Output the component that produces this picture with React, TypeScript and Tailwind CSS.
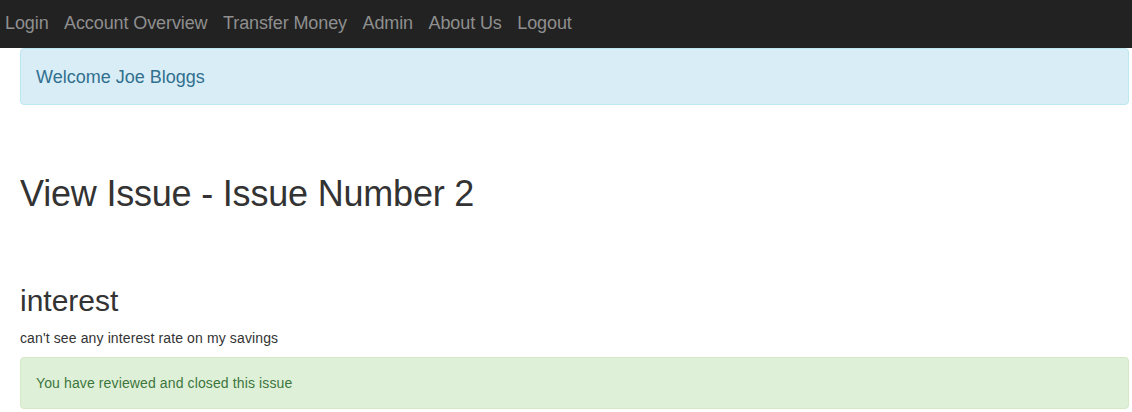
export default function App() {
  const links = ["Login", "Account Overview", "Transfer Money", "Admin", "About Us", "Logout"];
  return (
    <div className="min-h-[412px] bg-white" style={{ fontFamily: '"Liberation Sans", Arial, sans-serif' }}>
      <nav className="h-[48px] bg-[#222222] flex items-center pl-[5px] gap-[15.5px] pb-[2px]">
        {links.map((l) => (
          <span key={l} className="text-[18px] text-[#8f8f8f] leading-none tracking-[-0.1px]">{l}</span>
        ))}
      </nav>
      <div className="px-[20px] pr-[3px]">
        <div className="h-[57px] border border-[#bce8f1] bg-[#d9edf7] rounded-[4px] px-[15px] flex items-center text-[#31708f] text-[18px] pt-[1px]">
          Welcome Joe Bloggs
        </div>
        <h1 className="mt-[69px] text-[36px] leading-[40px] text-[#333333] tracking-[-0.2px]">View Issue - Issue Number 2</h1>
        <h2 className="mt-[70px] text-[30px] leading-[33px] text-[#333333]">interest</h2>
        <p className="mt-[11px] text-[14px] leading-[20px] text-[#333333] tracking-[0.12px]">can't see any interest rate on my savings</p>
        <div className="mt-[9px] h-[52px] border border-[#d6e9c6] bg-[#dff0d8] rounded-[4px] px-[15px] flex items-center text-[#3c763d] text-[14px] tracking-[0.12px]">
          You have reviewed and closed this issue
        </div>
      </div>
    </div>
  );
}
